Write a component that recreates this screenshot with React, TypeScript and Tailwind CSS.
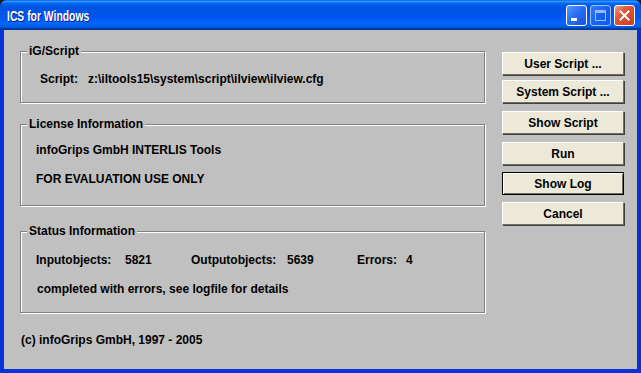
import React from "react";

const ui = "font-['Liberation_Sans',Arial,sans-serif] font-bold text-[12px] text-black";

function GroupBox({ title, className, children }: { title: string; className?: string; children: React.ReactNode }) {
  return (
    <fieldset
      className={`m-0 p-0 border border-[#808080] shadow-[inset_1px_1px_0_#fff,1px_1px_0_#fff] ${className ?? ""}`}
    >
      <legend className="ml-[6px] px-[2px] leading-[14px] bg-[#c0c0c0]">{title}</legend>
      {children}
    </fieldset>
  );
}

function Button({ label, isDefault, className }: { label: string; isDefault?: boolean; className?: string }) {
  return (
    <button
      className={`block w-[122px] h-[23px] bg-[#ece9d8] ${
        isDefault
          ? "border border-black shadow-[inset_1px_1px_0_#fff,inset_-1px_-1px_0_#716f64]"
          : "border-t border-l border-t-white border-l-white border-b border-r border-b-[#716f64] border-r-[#716f64] shadow-[1px_1px_0_#404040]"
      } ${ui} leading-[20px] ${className ?? ""}`}
    >
      {label}
    </button>
  );
}

function TitleButton({ kind }: { kind: "min" | "max" | "close" }) {
  const bg =
    kind === "close"
      ? "bg-[linear-gradient(135deg,#f0a088_0%,#e2583a_35%,#c8401e_100%)]"
      : "bg-[linear-gradient(135deg,#5a9aff_0%,#2a6ef5_45%,#1553de_100%)]";
  return (
    <div
      className={`w-[21px] h-[21px] rounded-[3px] border border-white flex items-center justify-center ${bg} ${
        kind === "max" ? "opacity-60" : ""
      }`}
    >
      {kind === "min" && <div className="w-[6px] h-[3px] bg-white self-end mb-[4px] mr-[5px]" />}
      {kind === "max" && <div className="w-[11px] h-[11px] border border-white border-t-[3px]" />}
      {kind === "close" && (
        <svg width="11" height="11" viewBox="0 0 11 11">
          <path d="M1.5 1.5 L9.5 9.5 M9.5 1.5 L1.5 9.5" stroke="#fff" strokeWidth="2" strokeLinecap="square" />
        </svg>
      )}
    </div>
  );
}

export default function App() {
  return (
    <div className="w-[641px] h-[373px] bg-[#1c1c1c] overflow-hidden">
      <div className="w-full h-full flex flex-col rounded-t-[7px] overflow-hidden bg-[#0831d9]">
        {/* title bar */}
        <div className="h-[30px] shrink-0 flex items-center pl-[7px] pr-[6px] bg-[linear-gradient(to_bottom,#0058ee_0%,#3a93ff_4%,#288eff_6%,#127dff_8%,#036ffc_10%,#0262ee_14%,#0057e5_20%,#0054e3_24%,#0055eb_56%,#005bf5_66%,#026afe_76%,#0062ef_86%,#0052d6_92%,#0040ab_94%,#003092_100%)]">
          <div className="flex-1">
            <span className="inline-block origin-left scale-x-[0.74] text-white font-['Liberation_Sans',Arial,sans-serif] font-bold text-[14px] [text-shadow:1px_1px_#0f1089]">
              ICS for Windows
            </span>
          </div>
          <div className="flex gap-[3px]">
            <TitleButton kind="min" />
            <TitleButton kind="max" />
            <TitleButton kind="close" />
          </div>
        </div>

        {/* client area */}
        <div className="flex-1 mx-[4px] mb-[4px] bg-[#c0c0c0] flex">
          <div className={`w-[481px] pl-[16px] pt-[14px] ${ui}`}>
            <GroupBox title="iG/Script" className="h-[59px]">
              <div className="flex leading-[14px] pl-[19px] pt-[14px]">
                <span className="w-[48px]">Script:</span>
                <span>z:\iltools15\system\script\ilview\ilview.cfg</span>
              </div>
            </GroupBox>

            <GroupBox title="License Information" className="mt-[14px] h-[89px]">
              <div className="pl-[15px] pt-[12px]">
                <div className="leading-[14px]">infoGrips GmbH INTERLIS Tools</div>
                <div className="leading-[14px] mt-[15px]">FOR EVALUATION USE ONLY</div>
              </div>
            </GroupBox>

            <GroupBox title="Status Information" className="mt-[18px] h-[89px]">
              <div className="pl-[15px] pt-[15px]">
                <div className="flex leading-[14px]">
                  <span className="w-[89px]">Inputobjects:</span>
                  <span className="w-[66px]">5821</span>
                  <span className="w-[96px]">Outputobjects:</span>
                  <span className="w-[70px]">5639</span>
                  <span className="w-[49px]">Errors:</span>
                  <span>4</span>
                </div>
                <div className="leading-[14px] mt-[15px] pl-[1px]">completed with errors, see logfile for details</div>
              </div>
            </GroupBox>

            <div className="mt-[20px] pl-[1px] leading-[14px]">(c) infoGrips GmbH, 1997 - 2005</div>
          </div>

          <div className="pl-[17px] pt-[22px]">
            <Button label="User Script ..." />
            <Button label="System Script ..." className="mt-[5px]" />
            <Button label="Show Script" className="mt-[8px]" />
            <Button label="Run" className="mt-[8px]" />
            <Button label="Show Log" isDefault className="mt-[7px]" />
            <Button label="Cancel" className="mt-[7px]" />
          </div>
        </div>
      </div>
    </div>
  );
}
